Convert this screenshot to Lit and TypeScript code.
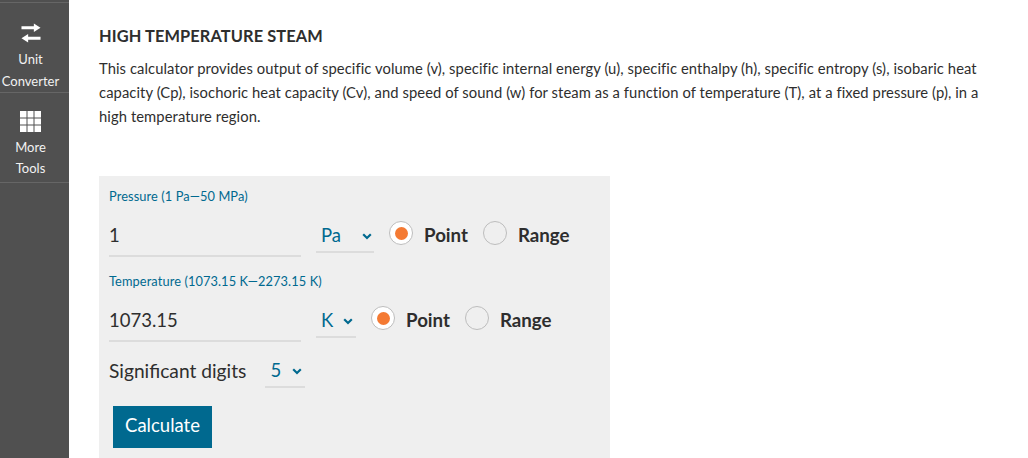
import { LitElement, html, css } from "lit";
import { customElement } from "lit/decorators.js";

const chevron = html`<svg class="chev" viewBox="0 0 10 7" width="10" height="7"><path d="M1.2 1.300 5 5 8.800 1.300" fill="none" stroke="#00698f" stroke-width="2.200"/></svg>`;

@customElement("app-root")
export class AppRoot extends LitElement {
  static styles = css`
    :host { display: flex; width: 1028px; height: 458px; overflow: hidden; background: #fff; font-family: Lato, "Noto Sans", sans-serif; color: #2e2e2e; }
    .side { width: 69px; flex: none; background: #505050; color: #f2f2f2; font-size: 13px; box-sizing: border-box; padding-top: 2px; }
    .side-item { border-top: 1px solid #666; height: 90px; box-sizing: border-box; display: flex; flex-direction: column; align-items: center; text-align: center; line-height: 22px; padding: 20px 8px 0 0; }
    .side-item.more { border-bottom: 1px solid #666; height: 91px; padding-top: 18px; line-height: 21px; }
    .side-item svg { display: block; margin-bottom: 5px; }
    .main { flex: 1; padding: 26px 40px 0 30px; min-width: 0; }
    h1 { margin: 0; font-size: 16.4px; line-height: 19px; font-weight: 700; color: #2e2e2e; letter-spacing: 0.1px; }
    p { margin: 11px 0 0; font-size: 14.77px; line-height: 24px; color: #2e2e2e; letter-spacing: 0.08px; }
    .panel { margin-top: 48px; width: 511px; height: 300px; background: #efefef; box-sizing: border-box; padding: 13px 10px 0; }
    .lab { font-size: 12.8px; line-height: 15px; color: #00698f; letter-spacing: 0.1px; }
    .row { display: flex; align-items: flex-start; margin-top: 17px; height: 53px; }
    .row.t { margin-top: 17px; height: 50px; }
    .input { width: 192px; height: 34px; border-bottom: 2px solid #dcdcdc; font-size: 18.5px; line-height: 29px; color: #2e2e2e; flex: none; }
    .sel { margin-left: 15px; height: 32px; border-bottom: 2px solid #dcdcdc; color: #00698f; font-size: 18.5px; line-height: 29px; display: flex; justify-content: space-between; align-items: flex-start; box-sizing: border-box; padding: 0 3px 0 5px; flex: none; }
    .sel .chev { margin-top: 12px; }
    .sel.pa { width: 58px; padding-right: 2px; }
    .sel.k { width: 40px; }
    .radio { margin-left: 15px; width: 24px; height: 24px; border: 1px solid #bdbdbd; border-radius: 50%; box-sizing: border-box; display: flex; align-items: center; justify-content: center; background: #efefef; flex: none; }
    .radio.on { background: #fff; }
    .radio.on::after { content: ""; width: 13px; height: 13px; border-radius: 50%; background: #f47a33; }
    .rl { font-size: 18.7px; font-weight: 700; line-height: 29px; color: #2e2e2e; margin-left: 11px; }
    .sig { display: flex; align-items: flex-start; height: 50px; font-size: 19.2px; line-height: 29px; }
    .sig .sel { margin-left: 19px; }
    button { display: block; margin: 0 0 0 4px; width: 99px; height: 42px; background: #00698f; color: #fff; border: 0; font: 18.5px/38px Lato, "Noto Sans", sans-serif; padding: 0 0 4px; box-sizing: border-box; }
  `;

  render() {
    return html`
      <nav class="side">
        <div class="side-item">
          <svg width="22" height="21" viewBox="0 0 22 21"><path fill="#fff" d="M1 3.500h13V0.500l7 4.500-7 4.500V6.500H1z"/><path fill="#fff" d="M21 14.500H8V11.500l-7 4.500 7 4.500v-3h13z"/></svg>
          <span>Unit</span><span>Converter</span>
        </div>
        <div class="side-item more">
          <svg width="21" height="21" viewBox="0 0 21 21"><path fill="#fff" d="M0 0h21v21H0z"/><path d="M7 0v21M14 0v21M0 7h21M0 14h21" stroke="#505050" stroke-width="1"/></svg>
          <span>More</span><span>Tools</span>
        </div>
      </nav>
      <main class="main">
        <h1>HIGH TEMPERATURE STEAM</h1>
        <p>This calculator provides output of specific volume (v), specific internal energy (u), specific enthalpy (h), specific entropy (s), isobaric heat capacity (Cp), isochoric heat capacity (Cv), and speed of sound (w) for steam as a function of temperature (T), at a fixed pressure (p), in a high temperature region.</p>
        <section class="panel">
          <div class="lab">Pressure (1 Pa—50 MPa)</div>
          <div class="row">
            <div class="input">1</div>
            <div class="sel pa"><span>Pa</span>${chevron}</div>
            <span class="radio on"></span><span class="rl">Point</span>
            <span class="radio"></span><span class="rl">Range</span>
          </div>
          <div class="lab">Temperature (1073.15 K—2273.15 K)</div>
          <div class="row t">
            <div class="input">1073.15</div>
            <div class="sel k"><span>K</span>${chevron}</div>
            <span class="radio on"></span><span class="rl">Point</span>
            <span class="radio"></span><span class="rl">Range</span>
          </div>
          <div class="sig">
            <span>Significant digits</span>
            <div class="sel k"><span>5</span>${chevron}</div>
          </div>
          <button>Calculate</button>
        </section>
      </main>
    `;
  }
}
